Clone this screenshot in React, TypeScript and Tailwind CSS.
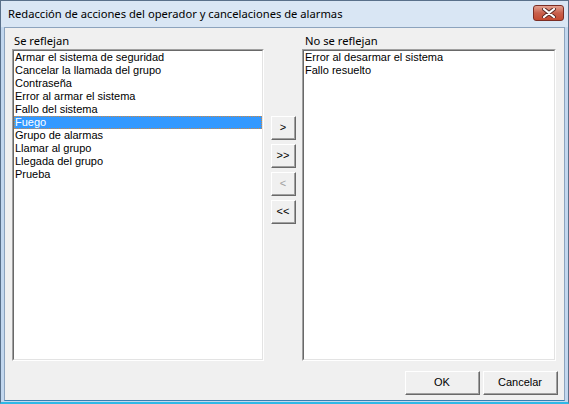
import React from "react";

const left = [
  "Armar el sistema de seguridad",
  "Cancelar la llamada del grupo",
  "Contraseña",
  "Error al armar el sistema",
  "Fallo del sistema",
  "Fuego",
  "Grupo de alarmas",
  "Llamar al grupo",
  "Llegada del grupo",
  "Prueba",
];

const right = ["Error al desarmar el sistema", "Fallo resuelto"];

const uiFont = { fontFamily: '"Noto Sans", "Open Sans", sans-serif' };
const listFont = { fontFamily: '"Liberation Sans", Arial, sans-serif' };

function ListBox({ items, selected, w }: { items: string[]; selected?: number; w: string }) {
  return (
    <div
      className={`${w} h-[312px] bg-white border-t border-l border-t-[#a0a0a0] border-l-[#a0a0a0] border-r border-b border-r-white border-b-white`}
    >
      <div className="h-full border-t border-l border-t-[#696969] border-l-[#696969] border-r border-b border-r-[#e3e3e3] border-b-[#e3e3e3]">
        {items.map((t, i) => (
          <div
            key={t}
            className={
              i === selected
                ? "h-[13px] pl-0 text-[11px] leading-[11px] text-white bg-[#3399ff] border border-dotted border-[#cc8844]"
                : "h-[13px] pl-[1px] pt-[1px] text-[11px] leading-[11px] text-black"
            }
            style={listFont}
          >
            {t}
          </div>
        ))}
      </div>
    </div>
  );
}

function Btn({ children, w, disabled }: { children: React.ReactNode; w: string; disabled?: boolean }) {
  return (
    <div className={`${w} h-[24px] border-t border-l border-t-white border-l-white border-r border-b border-r-[#696969] border-b-[#696969]`}>
      <div
        className={`h-full flex items-center justify-center bg-[#f0f0f0] border-r border-b border-r-[#a0a0a0] border-b-[#a0a0a0] text-[11px] ${
          disabled ? "text-[#a0a0a0]" : "text-black"
        }`}
        style={listFont}
      >
        {children}
      </div>
    </div>
  );
}

export default function App() {
  return (
    <div className="w-[569px] h-[404px] flex flex-col bg-[#c2d7ee] border border-[#59708a] border-b-[#2fb8e6] border-b-2">
      <div className="h-[26px] flex items-center justify-between pl-[7px] pr-[4px] bg-[#d9e6f4]">
        <span className="text-[11.2px] text-black" style={uiFont}>
          Redacción de acciones del operador y cancelaciones de alarmas
        </span>
        <div className="w-[31px] h-[16px] -mt-[3px] rounded-[3px] border border-[#7a2d24] bg-gradient-to-b from-[#e3a190] via-[#c8604c] to-[#c44a30] flex items-center justify-center">
          <svg width="14" height="10" viewBox="0 0 14 10">
            <path d="M2 1 L12 9 M12 1 L2 9" stroke="#5a2a24" strokeWidth="4" strokeLinecap="round" />
            <path d="M2 1 L12 9 M12 1 L2 9" stroke="#ffffff" strokeWidth="2.2" strokeLinecap="round" />
          </svg>
        </div>
      </div>
      <div className="flex-1 mx-[3px] mb-[1px] bg-[#f0f0f0] border border-[#8ca3bd] border-b-[#3b7fb0] flex flex-col pl-[7px] pr-[5px] pt-[5px]">
        <div className="flex">
          <div className="flex flex-col">
            <div className="h-[16px] pl-[2px] text-[11.2px] leading-[16px]" style={uiFont}>
              Se reflejan
            </div>
            <ListBox items={left} selected={5} w="w-[252px]" />
          </div>
          <div className="w-[38px] pl-[7px] pt-[83px] flex flex-col gap-[4px]">
            <Btn w="w-[25px]">&gt;</Btn>
            <Btn w="w-[25px]">&gt;&gt;</Btn>
            <Btn w="w-[25px]" disabled>&lt;</Btn>
            <Btn w="w-[25px]">&lt;&lt;</Btn>
          </div>
          <div className="flex flex-col">
            <div className="h-[16px] pl-[3px] text-[11.2px] leading-[16px]" style={uiFont}>
              No se reflejan
            </div>
            <ListBox items={right} w="w-[254px]" />
          </div>
        </div>
        <div className="flex justify-end gap-[3px] mt-[10px] pr-[1px]">
          <Btn w="w-[75px]">OK</Btn>
          <Btn w="w-[75px]">Cancelar</Btn>
        </div>
      </div>
    </div>
  );
}
